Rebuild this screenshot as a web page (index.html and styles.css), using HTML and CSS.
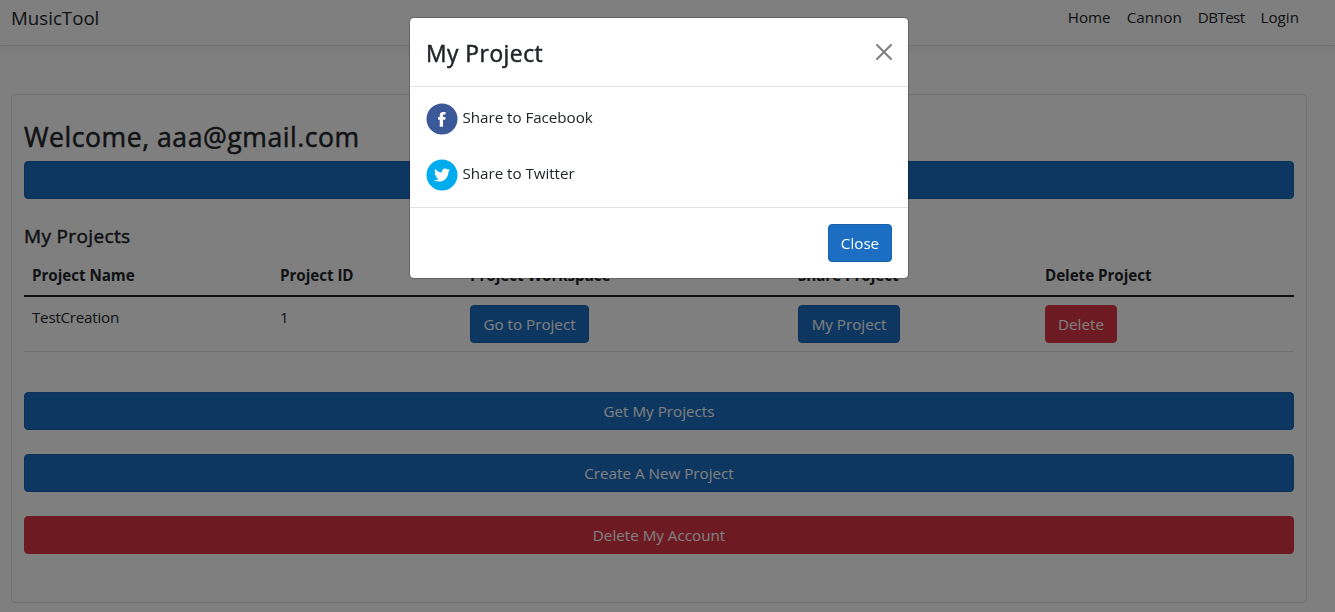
FILE: index.html
```html
<!DOCTYPE html>
<html lang="en">
<head>
<meta charset="utf-8">
<title>MusicTool</title>
<link rel="stylesheet" href="styles.css">
</head>
<body>
<header class="navbar">
  <a class="brand">MusicTool</a>
  <nav class="nav"><a>Home</a><a>Cannon</a><a class="tight">DBTest</a><a>Login</a></nav>
</header>
<main class="card">
  <h3 class="welcome">Welcome, aaa@gmail.com</h3>
  <button class="btn primary block"></button>
  <h5 class="subtitle">My Projects</h5>
  <table class="projects">
    <colgroup><col class="c-name"><col class="c-id"><col class="c-work"><col class="c-share"><col></colgroup>
    <thead>
      <tr><th>Project Name</th><th>Project ID</th><th>Project Workspace</th><th>Share Project</th><th>Delete Project</th></tr>
    </thead>
    <tbody>
      <tr>
        <td>TestCreation</td><td>1</td>
        <td><button class="btn primary go">Go to Project</button></td>
        <td><button class="btn primary share">My Project</button></td>
        <td><button class="btn danger delete">Delete</button></td>
      </tr>
    </tbody>
  </table>
  <div class="actions">
    <button class="btn primary block">Get My Projects</button>
    <button class="btn primary block">Create A New Project</button>
    <button class="btn danger block">Delete My Account</button>
  </div>
</main>
<div class="overlay">
  <section class="modal">
    <header class="modal-header">
      <h4 class="modal-title">My Project</h4>
      <svg class="close-icon" viewBox="0 0 16 16"><path d="M.293.293a1 1 0 0 1 1.414 0L8 6.586 14.293.293a1 1 0 1 1 1.414 1.414L9.414 8l6.293 6.293a1 1 0 0 1-1.414 1.414L8 9.414l-6.293 6.293a1 1 0 0 1-1.414-1.414L6.586 8 .293 1.707a1 1 0 0 1 0-1.414z"/></svg>
    </header>
    <div class="modal-body">
      <a class="share-row">
        <svg class="social" viewBox="0 0 64 64"><circle cx="32" cy="32" r="31" fill="#3b5998"/><path fill="#fff" d="M34.1 47.3V33.3h4.4l.6-5.3h-5v-2.7c0-1.4.1-2.1 2.2-2.1h2.7v-5.3h-4.4c-5.3 0-7.1 2.6-7.1 6.9V28h-3.3v5.3h3.3v14h6.6z"/></svg>
        <span>Share to Facebook</span>
      </a>
      <a class="share-row">
        <svg class="social" viewBox="0 0 64 64"><circle cx="32" cy="32" r="31" fill="#00aced"/><path fill="#fff" d="M48 22.1c-1.2.5-2.4.9-3.8 1 1.4-.8 2.4-2.1 2.9-3.6-1.3.8-2.7 1.3-4.2 1.6C41.7 19.8 40 19 38.200 19c-3.600 0-6.600 2.900-6.600 6.600 0 .5.1 1 .2 1.500-5.500-.3-10.300-2.900-13.500-6.900-.6 1-.9 2.100-.9 3.300 0 2.300 1.200 4.300 2.900 5.500-1.100 0-2.100-.3-3-.8v.1c0 3.200 2.300 5.800 5.300 6.400-.6.1-1.100.2-1.700.2-.4 0-.8 0-1.200-.1.8 2.600 3.300 4.500 6.100 4.600-2.200 1.800-5.100 2.800-8.200 2.800-.5 0-1.100 0-1.600-.1 2.900 1.900 6.400 2.900 10.100 2.900 12.100 0 18.700-10 18.700-18.700v-.8c1.300-.9 2.400-2.100 3.200-3.400z"/></svg>
        <span>Share to Twitter</span>
      </a>
    </div>
    <footer class="modal-footer"><button class="btn primary dismiss">Close</button></footer>
  </section>
</div>
</body>
</html>
```
FILE: styles.css
```css
* { box-sizing: border-box; }
html, body { height: 100%; overflow: hidden; }
body {
  margin: 0;
  background: #fff;
  color: #212529;
  font-family: "Open Sans", "Noto Sans", sans-serif;
  font-size: 15.200px;
  font-weight: 400;
  line-height: 24px;
}
h3, h4, h5 { margin: 0; font-weight: 400; -webkit-text-stroke: .5px currentColor; }

.navbar {
  display: flex;
  align-items: flex-start;
  justify-content: space-between;
  height: 46px;
  padding: 6px 36px 0 11px;
  border-bottom: 1px solid #dee2e6;
  box-shadow: 0 4px 12px rgba(0, 0, 0, .06);
}
.brand { font-size: 18.700px; }
.nav { display: flex; gap: 16px; margin-top: -1px; }
.tight { letter-spacing: -.6px; }

.card {
  width: 1296px;
  height: 509px;
  margin: 48px 0 0 11px;
  padding: 25px 12px 0;
  border: 1px solid #dfdfdf;
  border-radius: 4px;
}
.welcome { font-size: 26.600px; line-height: 34px; margin-bottom: 7px; letter-spacing: .53px; }
.subtitle { font-size: 19px; line-height: 24px; margin: 25px 0 7px; letter-spacing: .35px; }

.btn {
  display: block;
  height: 38px;
  padding: 0;
  border: 1px solid;
  border-radius: 4px;
  color: #fff;
  font: 400 15.200px/24px "Open Sans", "Noto Sans", sans-serif;
}
.primary { background: #1b6ec2; border-color: #1861ac; }
.danger { background: #dc3545; border-color: #dc3545; }
.block { width: 100%; }
.go { width: 119px; }
.share { width: 102px; }
.delete { width: 72px; }
.dismiss { width: 64px; }

.projects { width: 1270px; table-layout: fixed; border-collapse: separate; border-spacing: 0; }
.c-name { width: 248px; }
.c-id { width: 190px; }
.c-work { width: 328px; }
.c-share { width: 247px; }
.projects th, .projects td { padding: 8px; text-align: left; vertical-align: top; }
.projects th { font-weight: 700; letter-spacing: -.05px; border-bottom: 2px solid #212529; }
.projects td { letter-spacing: -.25px; border-bottom: 1px solid #dee2e6; }

.actions { display: flex; flex-direction: column; gap: 24px; margin-top: 40px; }

.overlay {
  position: fixed;
  inset: 0;
  padding: 17px 0 0 409px;
  background: rgba(0, 0, 0, .5);
}
.modal {
  width: 500px;
  border: 1px solid rgba(0, 0, 0, .2);
  border-radius: 5px;
  background: #fff;
  background-clip: padding-box;
}
.modal-header {
  display: flex;
  justify-content: space-between;
  height: 69px;
  padding: 18px 16px 0;
  border-bottom: 1px solid #dee2e6;
}
.modal-title { font-size: 22.800px; line-height: 36px; letter-spacing: .5px; }
.close-icon { width: 16px; height: 16px; margin-top: 8px; opacity: .5; }
.modal-body {
  display: flex;
  flex-direction: column;
  gap: 24px;
  height: 120px;
  padding: 16px;
}
.share-row { display: flex; gap: 4.500px; height: 32px; line-height: 28px; letter-spacing: -.04px; }
.social { width: 32px; height: 32px; }
.modal-footer {
  display: flex;
  justify-content: flex-end;
  height: 71px;
  padding: 16px;
  border-top: 1px solid #dee2e6;
}
```
